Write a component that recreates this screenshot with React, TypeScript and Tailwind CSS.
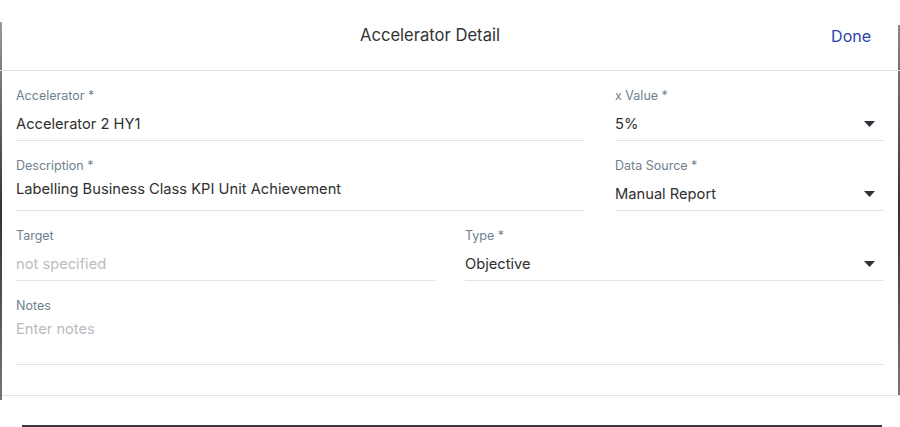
import React from "react";

function Caret() {
  return (
    <svg width="11" height="6" viewBox="0 0 11 6" className="shrink-0">
      <path d="M0 0 H11 L5.5 6 Z" fill="#2b323a" />
    </svg>
  );
}

function Field({
  label,
  value,
  placeholder,
  select,
  className = "",
  tall,
  area,
}: {
  label: string;
  value?: string;
  placeholder?: string;
  select?: boolean;
  className?: string;
  tall?: boolean;
  area?: boolean;
}) {
  return (
    <div className={`flex flex-col border-b border-[#e3e3e3] ${tall ? "h-[84px]" : "h-[70px]"} ${className}`}>
      <div className="mt-[17px] text-[12.5px] leading-[16px] text-[#6e7f8d]">{label}</div>
      <div className={`flex items-center justify-between ${area ? "mt-[5px]" : "mt-[10px]"}`}>
        {value ? (
          <span className="text-[14.7px] leading-[20px] text-[#2f2f2f]">{value}</span>
        ) : (
          <span className="text-[14.7px] leading-[20px] text-[#b9bcbf]">{placeholder}</span>
        )}
        {select && (
          <span className="mr-[9px]">
            <Caret />
          </span>
        )}
      </div>
    </div>
  );
}

export default function App() {
  return (
    <div
      className="relative w-[900px] h-[427px] bg-white overflow-hidden"
      style={{ fontFamily: "Inter, 'Noto Sans', sans-serif" }}
    >
      {/* frame edges peeking behind */}
      <div className="absolute left-0 top-[22px] h-[378px] w-[2px] bg-gradient-to-b from-[#9a9a9a] via-[#333] to-[#777]" />
      <div className="absolute right-0 top-[25px] h-[370px] w-[2px] bg-gradient-to-b from-[#888] via-[#333] to-[#777]" />
      <div className="absolute left-[22px] bottom-0 h-[2px] w-[860px] bg-[#3a3a3a]" />

      <div className="flex flex-col">
        <header className="relative flex h-[71px] items-center justify-center border-b border-[#e3e3e3]">
          <span className="text-[16.6px] text-[#333] -ml-[40px] mt-[1px]">Accelerator Detail</span>
          <span className="absolute right-[29px] top-[24px] text-[16px] text-[#2a3fa8]">Done</span>
        </header>

        <div className="flex flex-col px-[16px]">
          <div className="flex gap-[30px]">
            <Field className="w-[569px]" label="Accelerator *" value="Accelerator 2 HY1" />
            <Field className="flex-1" label="x Value *" value="5%" select />
          </div>
          <div className="flex gap-[30px]">
            <Field className="w-[569px]" label="Description *" value="Labelling Business Class KPI Unit Achievement" area />
            <Field className="flex-1" label="Data Source *" value="Manual Report" select />
          </div>
          <div className="flex gap-[30px]">
            <Field className="w-[419px]" label="Target" placeholder="not specified" />
            <Field className="flex-1" label="Type *" value="Objective" select />
          </div>
          <Field label="Notes" placeholder="Enter notes" tall area />
        </div>
        <div className="mt-[30px] border-b border-[#e3e3e3] ml-[2px]" />
      </div>
    </div>
  );
}
